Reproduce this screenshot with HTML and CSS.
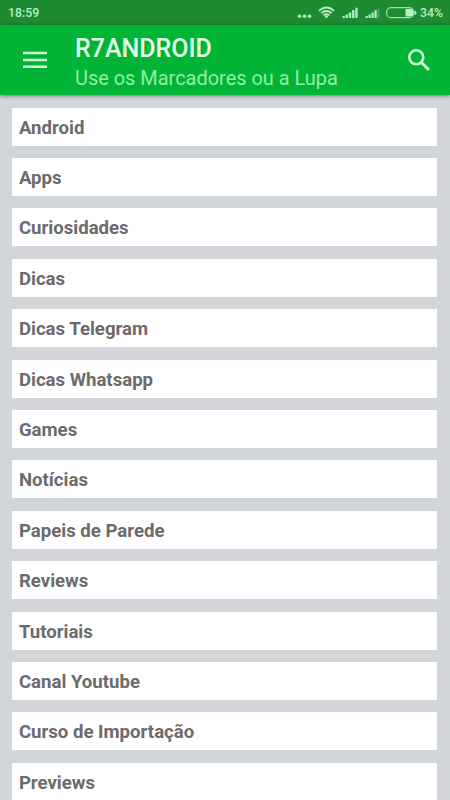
FILE: index.html
```html
<!DOCTYPE html>
<html lang="pt-BR">
<head>
<meta charset="utf-8">
<title>R7ANDROID</title>
<link rel="stylesheet" href="styles.css">
</head>
<body>
<div class="status">
  <span class="time">18:59</span>
  <svg class="status-icons" width="122" height="25" viewBox="296 0 122 25" fill="#b9efc2">
    <circle cx="299.5" cy="16.3" r="1.8"/><circle cx="304.5" cy="16.3" r="1.8"/><circle cx="309.5" cy="16.3" r="1.8"/>
    <g fill="none" stroke="#b9efc2" stroke-width="1.8">
      <path d="M319 10.7Q326.500 4.300 334 10.700M321.300 13.100Q326.500 8.800 331.700 13.100M323.500 15.400Q326.500 13 329.500 15.400"/>
    </g>
    <path d="M324.600 16.200Q326.500 14.800 328.400 16.200L326.500 18.200Z"/>
    <path d="M342.500 16h2.300v2h-2.300zM345.700 14.500h2.300V18h-2.300zM348.900 12.500h2.300V18h-2.300zM352.100 10h2.300v8h-2.300zM355.300 7.800h2.300V18h-2.300z"/>
    <path d="M365.500 16h2.200v2h-2.200zM368.500 14.500h2.200V18h-2.200zM371.500 12.500h2.200V18h-2.200zM374.500 10.300h2.200V18h-2.200z"/>
    <path opacity=".3" d="M377.500 8.500h1.700V18h-1.700z"/>
    <rect x="386.700" y="7.700" width="27" height="10" rx="4.500" fill="none" stroke="#9fe0aa" stroke-width="1.200"/>
    <path d="M405.500 9H411Q413 9 413 11V14.500Q413 16.500 411 16.500H405.500ZM414.500 10.500Q416.500 10.500 416.500 12.700T414.500 15Z"/>
  </svg>
  <span class="battery">34%</span>
</div>
<header class="bar">
  <svg class="menu" width="24" height="18" viewBox="0 0 24 18" fill="#d2fbdb"><path d="M0 .7h24v2.600H0zM0 7.700h24v2.600H0zM0 14.500h24v2.600H0z"/></svg>
  <div class="titles">
    <h1>R7ANDROID</h1>
    <p>Use os Marcadores ou a Lupa</p>
  </div>
  <svg class="search" width="24" height="24" viewBox="0 0 24 24" fill="none" stroke="#d2fbdb"><circle cx="9.300" cy="9.300" r="7" stroke-width="2.600"/><path d="M14.200 14.200L22 22" stroke-width="3"/></svg>
</header>
<ul class="list">
  <li>Android</li>
  <li>Apps</li>
  <li>Curiosidades</li>
  <li>Dicas</li>
  <li>Dicas Telegram</li>
  <li>Dicas Whatsapp</li>
  <li>Games</li>
  <li>Notícias</li>
  <li>Papeis de Parede</li>
  <li>Reviews</li>
  <li>Tutoriais</li>
  <li>Canal Youtube</li>
  <li>Curso de Importação</li>
  <li>Previews</li>
</ul>
</body>
</html>
```
FILE: styles.css
```css
* { box-sizing: border-box; }
body {
  margin: 0;
  height: 800px;
  overflow: hidden;
  display: flex;
  flex-direction: column;
  background: #d2d5da;
  font-family: Roboto, "Liberation Sans", sans-serif;
}
.status {
  flex: none;
  height: 25px;
  padding: 0 8px;
  display: flex;
  align-items: center;
  background: #1e8a32;
  color: #b9efc2;
  font-size: 12.3px;
  font-weight: 500;
}
.status-icons { margin-left: auto; margin-right: 2px; }
.battery { margin-right: -1px; }
.time, .battery { line-height: 25px; padding-top: 1px; }
.bar {
  flex: none;
  height: 70px;
  padding: 0 19px 0 23px;
  display: flex;
  align-items: center;
  background: #02b435;
  box-shadow: 0 1px 4px rgba(0, 0, 0, .45);
}
.titles { margin-left: 28px; flex: 1; padding-top: 7px; }
h1 {
  margin: 0;
  font-size: 25px;
  line-height: 30px;
  font-weight: 500;
  color: #e2ffe9;
}
.titles p {
  margin: 0;
  font-size: 19.950px;
  line-height: 29px;
  color: #8ff0a4;
}
.list {
  margin: 0;
  padding: 12.600px 12.600px 12.500px 12.400px;
  list-style: none;
  display: flex;
  flex-direction: column;
  gap: 12.400px;
}
.list li {
  flex: none;
  height: 38px;
  padding-left: 6.500px;
  background: #fff;
  color: #6b6b6b;
  font-size: 18.600px;
  line-height: 40px;
  font-weight: 700;
}
```
